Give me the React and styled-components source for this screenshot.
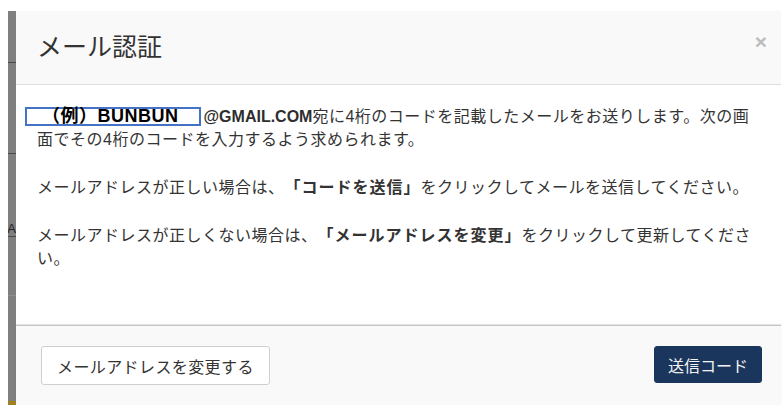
import React from 'react';
import styled, { createGlobalStyle } from 'styled-components';

const GlobalStyle = createGlobalStyle`
  html, body {
    margin: 0;
    padding: 0;
    background: #fff;
    height: 100%;
    overflow: hidden;
  }
  body {
    font-family: "Liberation Sans", "Noto Sans CJK JP", sans-serif;
    color: #333;
    text-spacing-trim: space-all;
  }
`;

const Page = styled.div`
  display: flex;
  align-items: stretch;
  height: 405px;
  padding: 11px 3px 0 8px;
  box-sizing: border-box;
`;

const Backdrop = styled.div`
  width: 8px;
  flex-shrink: 0;
  background: #7f7f7f;
  display: flex;
  flex-direction: column;
  overflow: hidden;
`;

const Segment = styled.div`
  height: ${(p) => p.h}px;
  flex-shrink: 0;
  border-bottom: 1px solid ${(p) => (p.light ? '#8f8f8f' : '#4a4a4a')};
  display: flex;
  align-items: flex-end;
  justify-content: flex-end;
  font-size: 13px;
  line-height: 14px;
  color: #222;
`;

const BackdropFill = styled.div`
  flex: 1;
  border-bottom: 4px solid #a08020;
`;

const Modal = styled.div`
  flex: 1;
  display: flex;
  flex-direction: column;
  background: #fff;
  min-width: 0;
`;

const Header = styled.div`
  display: flex;
  justify-content: space-between;
  align-items: flex-start;
  padding: 19px 14px 19px 21px;
  background: #f9f9f9;
  border-bottom: 1px solid #dedede;
`;

const Title = styled.h2`
  margin: 0;
  font-size: 25px;
  line-height: 35px;
  font-weight: 400;
  color: #333;
`;

const Close = styled.button`
  border: 0;
  background: none;
  padding: 0;
  margin-top: 2px;
  font-family: "Liberation Sans", sans-serif;
  font-size: 21px;
  font-weight: 700;
  line-height: 20px;
  color: #bcbcbc;
  cursor: pointer;
`;

const Body = styled.div`
  flex: 1;
  padding: 20px 21px 29px;
`;

const Para = styled.p`
  margin: 0 0 25px;
  font-size: 16px;
  line-height: 23px;
  letter-spacing: 0.5px;
  color: #333;
`;

const Masked = styled.span`
  display: inline-block;
  vertical-align: top;
  margin: 2px 3px 0 -12px;
  padding: 0 20px 0 15px;
  height: 15px;
  line-height: 15px;
  border: 2px solid #4472c4;
  background: #fff;
  color: #000;
  font-size: 18px;
  font-weight: 700;
  letter-spacing: 0.5px;
`;

const Email = styled.strong`
  font-weight: 700;
  letter-spacing: 0;
  color: #2e2e2e;
`;

const Strong = styled.strong`
  font-weight: 700;
  letter-spacing: 1px;
`;

const Footer = styled.div`
  display: flex;
  justify-content: space-between;
  align-items: flex-start;
  padding: 20px 19px 20px 25px;
  background: #f9f9f9;
  border-top: 1px solid #c4c4c4;
  box-shadow: 0 -1px 1px rgba(0, 0, 0, 0.1);
`;

const Button = styled.button`
  height: ${(p) => (p.primary ? 37 : 39)}px;
  padding: 0 ${(p) => (p.primary ? 13 : 15)}px;
  border-radius: 3px;
  border: 1px solid ${(p) => (p.primary ? '#1b365d' : '#cfcfcf')};
  background: ${(p) => (p.primary ? '#1b365d' : '#fff')};
  color: ${(p) => (p.primary ? '#f4f4f4' : '#333')};
  font-family: "Liberation Sans", "Noto Sans CJK JP", sans-serif;
  font-size: 16px;
  letter-spacing: ${(p) => (p.primary ? 0 : 0.4)}px;
  cursor: pointer;
`;

export default function App() {
  return (
    <>
      <GlobalStyle />
      <Page>
        <Backdrop>
          <Segment h={51} />
          <Segment h={90} />
          <Segment h={82}>A</Segment>
          <Segment h={58} light />
          <BackdropFill />
        </Backdrop>
        <Modal>
          <Header>
            <Title>メール認証</Title>
            <Close aria-label="close">×</Close>
          </Header>
          <Body>
            <Para>
              <Masked>（例）BUNBUN</Masked>
              <Email>@GMAIL.COM</Email>宛に4桁のコードを記載したメールをお送りします。次の画面でその4桁のコードを入力するよう求められます。
            </Para>
            <Para>
              メールアドレスが正しい場合は、<Strong>「コードを送信」</Strong>をクリックしてメールを送信してください。
            </Para>
            <Para>
              メールアドレスが正しくない場合は、<Strong>「メールアドレスを変更」</Strong>をクリックして更新してください。
            </Para>
          </Body>
          <Footer>
            <Button>メールアドレスを変更する</Button>
            <Button primary>送信コード</Button>
          </Footer>
        </Modal>
      </Page>
    </>
  );
}
